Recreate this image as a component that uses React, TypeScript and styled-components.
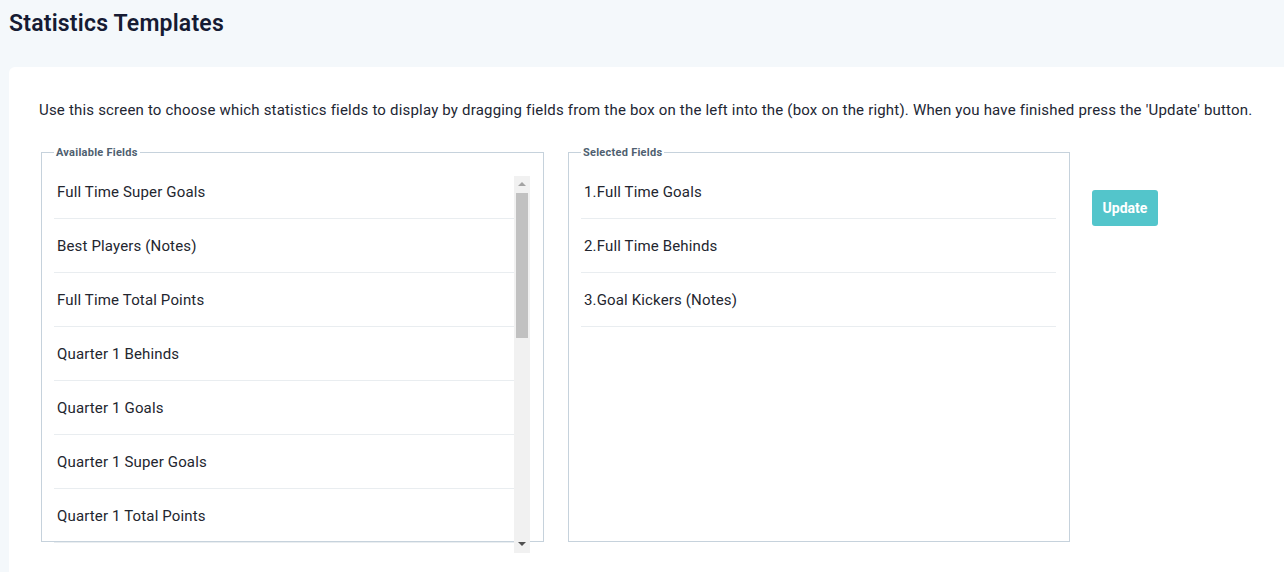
import React from 'react';
import styled, { createGlobalStyle } from 'styled-components';

const availableFields = [
  'Full Time Super Goals',
  'Best Players (Notes)',
  'Full Time Total Points',
  'Quarter 1 Behinds',
  'Quarter 1 Goals',
  'Quarter 1 Super Goals',
  'Quarter 1 Total Points',
];

const selectedFields = ['Full Time Goals', 'Full Time Behinds', 'Goal Kickers (Notes)'];

const GlobalStyle = createGlobalStyle`
  html, body {
    margin: 0;
    padding: 0;
    background: #f4f8fb;
    font-family: Roboto, "Liberation Sans", Arial, sans-serif;
    overflow: hidden;
  }
  * { box-sizing: border-box; }
`;

export default function App() {
  return (
    <>
      <GlobalStyle />
      <Page>
        <Title>Statistics Templates</Title>
        <Card>
          <Intro>
            Use this screen to choose which statistics fields to display by dragging fields from the box on the left
            into the (box on the right). When you have finished press the 'Update' button.
          </Intro>
          <Columns>
            <FieldBox $width={503}>
              <Legend>Available Fields</Legend>
              <ScrollFrame>
                <ScrollList>
                  {availableFields.map((f, i) => (
                    <Item key={i} $first={i === 0}>{f}</Item>
                  ))}
                </ScrollList>
                <Scrollbar>
                  <ArrowButton>
                    <svg width="16" height="16" viewBox="0 0 16 16">
                      <polygon points="4,10 12,10 8,6" fill="#a3a3a3" />
                    </svg>
                  </ArrowButton>
                  <Thumb />
                  <ArrowButton>
                    <svg width="16" height="16" viewBox="0 0 16 16">
                      <polygon points="4,6 12,6 8,10" fill="#505050" />
                    </svg>
                  </ArrowButton>
                </Scrollbar>
              </ScrollFrame>
            </FieldBox>
            <FieldBox $width={502}>
              <Legend>Selected Fields</Legend>
              <PlainList>
                {selectedFields.map((f, i) => (
                  <Item key={i}>{i + 1}.{f}</Item>
                ))}
              </PlainList>
            </FieldBox>
            <UpdateButton>Update</UpdateButton>
          </Columns>
        </Card>
      </Page>
    </>
  );
}

const Page = styled('div')`
  display: flex;
  flex-direction: column;
  height: 572px;
`;

const Title = styled('h1')`
  margin: 0;
  padding: 9px 0 0 9px;
  height: 67px;
  font-size: 23px;
  font-weight: 600;
  line-height: 30px;
  color: #161b33;
  letter-spacing: 0.2px;
`;

const Card = styled('div')`
  flex: 1;
  margin-left: 9px;
  background: #ffffff;
  border-radius: 6px 0 0 0;
  padding: 33px 0 0 30px;
`;

const Intro = styled('p')`
  margin: 0;
  font-size: 15px;
  line-height: 20px;
  letter-spacing: 0.19px;
  color: #222633;
  white-space: nowrap;
`;

const Columns = styled('div')`
  display: flex;
  align-items: flex-start;
  margin-top: 26px;
  padding-left: 2px;
`;

const FieldBox = styled('fieldset')<{ $width: number }>`
  margin: 0 24px 0 0;
  padding: 0 13px 0 12px;
  width: ${(p) => p.$width}px;
  height: 396px;
  border: 1px solid #c6d2dc;
  min-width: 0;
`;

const Legend = styled('legend')`
  margin-left: 0;
  padding: 0 2px;
  font-size: 11px;
  font-weight: 700;
  line-height: 13px;
  letter-spacing: 0.25px;
  color: #4f5f70;
`;

const ScrollFrame = styled('div')`
  display: flex;
  margin-top: 17px;
  height: 377px;
`;

const ScrollList = styled('div')`
  flex: 1;
  min-width: 0;
  overflow: hidden;
`;

const Scrollbar = styled('div')`
  display: flex;
  flex-direction: column;
  width: 16px;
  flex-shrink: 0;
  background: #f1f1f1;
`;

const ArrowButton = styled('div')`
  display: flex;
  align-items: center;
  justify-content: center;
  height: 16px;
  flex-shrink: 0;

  &:last-child {
    margin-top: auto;
    height: 18px;
  }
`;

const Thumb = styled('div')`
  margin: 1px 2px 0;
  height: 145px;
  background: #c1c1c1;
`;

const PlainList = styled('div')`
  margin-top: 6px;
`;

const Item = styled('div')<{ $first?: boolean }>`
  display: flex;
  align-items: center;
  height: ${(p) => (p.$first ? '43px' : '54px')};
  padding: ${(p) => (p.$first ? '0 3px 10px' : '0 3px 0')};
  border-bottom: 1px solid #e9edf0;
  font-size: 15px;
  letter-spacing: 0.15px;
  color: #23262f;
`;

const UpdateButton = styled('button')`
  margin: 44px 0 0 -2px;
  width: 66px;
  height: 36px;
  border: none;
  border-radius: 3px;
  background: #53c5cb;
  color: #ffffff;
  font-family: inherit;
  font-size: 14px;
  font-weight: 700;
  cursor: pointer;
`;
